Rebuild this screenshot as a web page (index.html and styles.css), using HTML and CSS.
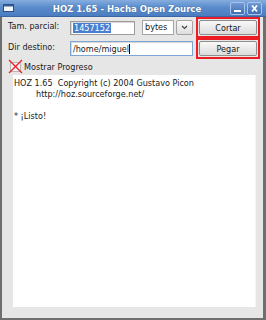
FILE: index.html
```html
<!DOCTYPE html>
<html lang="es">
<head>
    <meta charset="UTF-8">
    <title>HOZ 1.65 - Hacha Open Zource</title>
    <link rel="stylesheet" href="styles.css">
</head>
<body>
    <div class="window">
        <div class="titlebar">
            <svg class="app-icon" width="11" height="8" viewBox="0 0 11 8">
                <rect x="0.5" y="0.5" width="10" height="7" fill="#f4f6fa" stroke="#2c4f86"/>
                <rect x="1" y="1" width="9" height="1.5" fill="#3a5f99"/>
            </svg>
            <span class="title">HOZ 1.65 - Hacha Open Zource</span>
            <div class="wm-buttons">
                <div class="wm-btn">
                    <svg width="13" height="11" viewBox="0 0 13 11"><rect x="3" y="7" width="7" height="2" fill="#fff"/></svg>
                </div>
                <div class="wm-btn">
                    <svg width="13" height="11" viewBox="0 0 13 11"><path d="M4 2.5 L9 8.5 M9 2.5 L4 8.5" stroke="#fff" stroke-width="1.8"/></svg>
                </div>
            </div>
        </div>

        <div class="content">
            <div class="form">
                <span class="label">Tam. parcial:</span>
                <div class="size-row">
                    <div class="field size-field"><span class="selected">1457152</span></div>
                    <div class="combo">
                        <div class="combo-text">bytes</div>
                        <div class="combo-arrow">
                            <svg width="7" height="5" viewBox="0 0 7 5"><path d="M1 1 L3.5 3.5 L6 1" fill="none" stroke="#444" stroke-width="1.2"/></svg>
                        </div>
                    </div>
                </div>
                <div class="marked"><button class="btn">Cortar</button></div>

                <span class="label">Dir destino:</span>
                <div class="field dir-field">/home/miguel<span class="caret"></span></div>
                <div class="marked"><button class="btn">Pegar</button></div>
            </div>

            <div class="check-row">
                <svg class="check" width="15" height="15" viewBox="0 0 15 15">
                    <rect x="2.5" y="3.5" width="10" height="9" fill="#f2f2f2" stroke="#b8b8b8"/>
                    <path d="M1 1 L14 14 M14 1 L1 14" stroke="#ee1c24" stroke-width="1.3"/>
                </svg>
                <span>Mostrar Progreso</span>
            </div>

            <div class="log">
                <div>HOZ 1.65&nbsp;&nbsp;Copyright (c) 2004 Gustavo Picon</div>
                <div class="indent">http://hoz.sourceforge.net/</div>
                <div>&nbsp;</div>
                <div>* ¡Listo!</div>
            </div>
        </div>
    </div>
</body>
</html>
```

FILE: styles.css
```css
body {
    margin: 0;
    background-color: #6e6e6e;
    font-family: "DejaVu Sans Condensed", "Liberation Sans", sans-serif;
    font-size: 9px;
    color: #1a1a1a;
}
.window {
    width: 266px;
    height: 320px;
    box-sizing: border-box;
    display: flex;
    flex-direction: column;
    background-color: #e6e6e6;
    border: 2px solid #6e6e6e;
    border-right-width: 3px;
    border-top: none;
}
.titlebar {
    height: 17px;
    margin: 0 -3px 0 -2px;
    display: flex;
    align-items: center;
    background: linear-gradient(#86addf, #5a8ccc 45%, #4a7cc0);
    border-bottom: 1px solid #3b65a3;
    box-sizing: border-box;
    padding: 0 4px 0 3px;
}
.app-icon {
    flex: none;
}
.title {
    flex: 1;
    text-align: center;
    color: #fff;
    font-weight: bold;
    font-size: 9.5px;
    text-shadow: 0 0 1px #2a4f88;
    padding-left: 10px;
}
.wm-buttons {
    display: flex;
    gap: 2px;
}
.wm-btn {
    width: 13px;
    height: 11px;
    display: flex;
    border: 1px solid #a8c4ea;
    border-radius: 2px;
    background: linear-gradient(#6f9bd6, #3f6fb3);
}
.content {
    flex: 1;
    display: flex;
    flex-direction: column;
}
.form {
    display: grid;
    grid-template-columns: 62px 126px 64px;
    align-items: center;
    padding: 0 0 0 6px;
}
.label {
    padding-bottom: 3px;
}
.size-row {
    display: flex;
    align-items: center;
    gap: 7px;
}
.field {
    height: 14px;
    box-sizing: border-box;
    background-color: #fff;
    border: 1px solid #9c9c9c;
    box-shadow: inset 1px 1px 0 #d8d8d8;
    display: flex;
    align-items: center;
    padding-left: 2px;
}
.size-field {
    width: 65px;
}
.selected {
    background-color: #4a7fd0;
    color: #fff;
    padding: 0 1px;
}
.dir-field {
    width: 123px;
    height: 15px;
    border-color: #7fa5d4;
}
.caret {
    width: 1px;
    height: 10px;
    background-color: #000;
}
.combo {
    display: flex;
    gap: 2px;
}
.combo-text {
    width: 32px;
    height: 15px;
    box-sizing: border-box;
    background-color: #fff;
    border: 1px solid #a4a4a4;
    padding: 1px 2px;
}
.combo-arrow {
    width: 17px;
    height: 15px;
    box-sizing: border-box;
    border: 1px solid #a4a4a4;
    border-radius: 2px;
    background: linear-gradient(#fafafa, #dedede);
    display: flex;
    align-items: center;
    justify-content: center;
}
.marked {
    height: 21px;
    box-sizing: border-box;
    border: 2px solid #ec1c24;
    padding: 1px;
    display: flex;
}
.btn {
    flex: 1;
    font-family: inherit;
    font-size: 9px;
    color: #1a1a1a;
    border: 1px solid #8e8e8e;
    border-radius: 2px;
    background: linear-gradient(#f8f8f8, #dcdcdc);
    padding: 0;
    cursor: pointer;
}
.check-row {
    display: flex;
    align-items: center;
    gap: 1px;
    height: 15px;
    padding: 0 0 0 6px;
}
.log {
    height: 232px;
    margin: 1px 7px 0 11px;
    background-color: #fff;
    border-right: 1px solid #f4f4f4;
    padding: 3px 0 0 1px;
    line-height: 11px;
    box-sizing: border-box;
}
.indent {
    padding-left: 22px;
}
```
